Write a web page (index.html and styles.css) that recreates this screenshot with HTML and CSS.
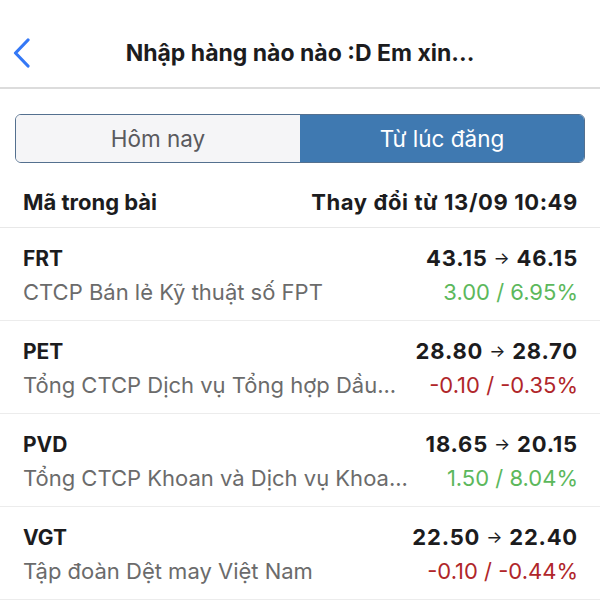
FILE: index.html
```html
<!DOCTYPE html>
<html lang="vi">
<head>
    <meta charset="UTF-8">
    <meta name="viewport" content="width=device-width, initial-scale=1.0">
    <title>Nhập hàng nào nào :D Em xin...</title>
    <link rel="stylesheet" href="styles.css">
</head>
<body>
    <!-- Top navigation bar -->
    <header class="nav-bar">
        <a class="back-btn" href="#">
            <svg width="20" height="30" viewBox="0 0 20 30">
                <path d="M16 2 L3.5 15 L16 28" fill="none" stroke="#3478f6" stroke-width="3.2" stroke-linecap="round" stroke-linejoin="round"/>
            </svg>
        </a>
        <h1 class="nav-title">Nhập hàng nào nào :D Em xin...</h1>
    </header>

    <!-- Segment switch -->
    <div class="segment">
        <button class="segment-item">Hôm nay</button>
        <button class="segment-item active">Từ lúc đăng</button>
    </div>

    <!-- Column titles -->
    <div class="list-head">
        <span>Mã trong bài</span>
        <span class="head-time">Thay đổi từ 13/09 10:49</span>
    </div>

    <!-- Stock rows -->
    <ul class="stock-list">
        <li class="stock-row">
            <div class="row-line">
                <span class="ticker">FRT</span>
                <span class="price">43.15<span class="arrow">→</span>46.15</span>
            </div>
            <div class="row-line">
                <span class="company">CTCP Bán lẻ Kỹ thuật số FPT</span>
                <span class="change up">3.00 / 6.95%</span>
            </div>
        </li>
        <li class="stock-row">
            <div class="row-line">
                <span class="ticker">PET</span>
                <span class="price">28.80<span class="arrow">→</span>28.70</span>
            </div>
            <div class="row-line">
                <span class="company">Tổng CTCP Dịch vụ Tổng hợp Dầu...</span>
                <span class="change down">-0.10 / -0.35%</span>
            </div>
        </li>
        <li class="stock-row">
            <div class="row-line">
                <span class="ticker">PVD</span>
                <span class="price">18.65<span class="arrow">→</span>20.15</span>
            </div>
            <div class="row-line">
                <span class="company">Tổng CTCP Khoan và Dịch vụ Khoa...</span>
                <span class="change up">1.50 / 8.04%</span>
            </div>
        </li>
        <li class="stock-row">
            <div class="row-line">
                <span class="ticker">VGT</span>
                <span class="price">22.50<span class="arrow">→</span>22.40</span>
            </div>
            <div class="row-line">
                <span class="company">Tập đoàn Dệt may Việt Nam</span>
                <span class="change down">-0.10 / -0.44%</span>
            </div>
        </li>
    </ul>
</body>
</html>
```

FILE: styles.css
```css
/* Page base */
body {
    margin: 0;
    font-family: Inter, "Noto Sans", sans-serif;
    background-color: #fff;
    color: #1c1c1e;
}

/* Navigation bar */
.nav-bar {
    position: relative;
    height: 87px;
    display: flex;
    align-items: center;
    justify-content: center;
    border-bottom: 2px solid #dcdcdc;
}

.back-btn {
    position: absolute;
    left: 12px;
    top: 38px;
    display: block;
    line-height: 0;
}

.nav-title {
    margin: 19px 0 0;
    font-size: 23px;
    font-weight: 700;
}

/* Segmented control */
.segment {
    display: flex;
    margin: 25px 15px 0;
    height: 47px;
    border: 1px solid #54708f;
    border-radius: 6px;
    overflow: hidden;
}

.segment-item {
    flex: 1;
    border: none;
    margin: 0;
    font-family: inherit;
    font-size: 22.5px;
    background-color: #f5f5f7;
    color: #5a5a5e;
}

.segment-item.active {
    background-color: #3f79b1;
    color: #fff;
}

/* List header */
.list-head {
    display: flex;
    justify-content: space-between;
    padding: 26px 22px 0 23px;
    height: 38px;
    font-size: 22px;
    font-weight: 700;
    border-bottom: 1px solid #e8e8e8;
}

.head-time {
    letter-spacing: 0.6px;
}

/* Stock list */
.stock-list {
    list-style: none;
    margin: 0;
    padding: 0;
}

.stock-row {
    height: 92px;
    padding: 0 22px 0 23px;
    border-bottom: 1px solid #ececec;
    display: flex;
    flex-direction: column;
    justify-content: center;
    gap: 10px;
}

.row-line {
    display: flex;
    justify-content: space-between;
    align-items: baseline;
    gap: 20px;
    height: 25px;
}

.ticker {
    font-size: 21px;
    font-weight: 700;
    margin-top: 2px;
}

.price {
    font-size: 22px;
    font-weight: 700;
    letter-spacing: 0.8px;
    white-space: nowrap;
}

.arrow {
    display: inline-block;
    margin: 0 6px;
    font-size: 17px;
    font-weight: 400;
    position: relative;
    top: -2px;
}

.company {
    font-size: 22px;
    color: #6b6b6b;
    white-space: nowrap;
    overflow: hidden;
}

.change {
    font-size: 22px;
    white-space: nowrap;
}

.change.up {
    color: #5cb85c;
}

.change.down {
    color: #b0262a;
}
```
